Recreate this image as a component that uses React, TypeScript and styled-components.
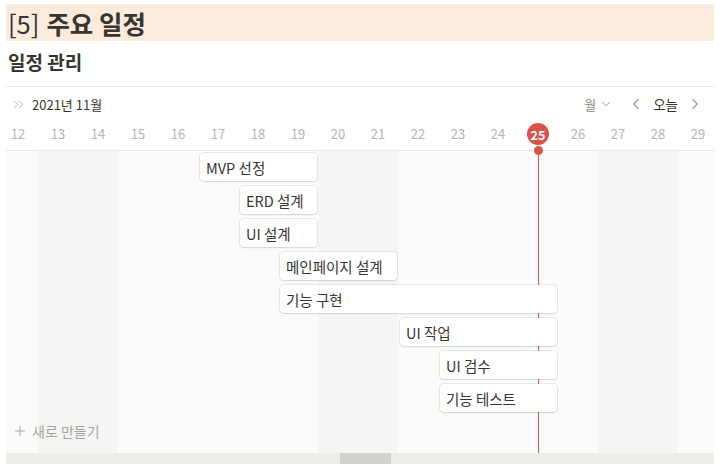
import React from "react";
import styled, { createGlobalStyle } from "styled-components";
import { ChevronsRight, ChevronDown, ChevronLeft, ChevronRight, Plus } from "lucide-react";

const Global = createGlobalStyle`
  html, body { margin: 0; padding: 0; background: #fff; }
  body { font-family: "Noto Sans CJK KR", "Noto Sans", sans-serif; color: #37352f; }
  * { box-sizing: border-box; }
`;

const COL = 40;
const DAYS = Array.from({ length: 18 }, (_, i) => 12 + i);
const WEEKEND = new Set([13, 14, 20, 21, 27, 28]);
const TODAY = 25;

const tasks = [
  { name: "MVP 선정", from: 17, to: 19 },
  { name: "ERD 설계", from: 18, to: 19 },
  { name: "UI 설계", from: 18, to: 19 },
  { name: "메인페이지 설계", from: 19, to: 21 },
  { name: "기능 구현", from: 19, to: 25 },
  { name: "UI 작업", from: 22, to: 25 },
  { name: "UI 검수", from: 23, to: 25 },
  { name: "기능 테스트", from: 23, to: 25 },
];

const Page = styled.div`
  width: 719px;
  padding: 4px 5px 0 6px;
`;

const TitleBand = styled.h1`
  margin: 0;
  height: 37px;
  background: #faebdd;
  padding-left: 2px;
  display: flex;
  align-items: center;
  font-size: 25.5px;
  line-height: 1;
  font-weight: 700;
  color: #37352f;
`;

const Bracket = styled.span`
  font-weight: 400;
  margin-right: 7px;
`;

const SubTitle = styled.h2`
  margin: 0;
  height: 46px;
  display: flex;
  align-items: center;
  padding-left: 2px;
  padding-bottom: 4px;
  font-size: 19px;
  font-weight: 700;
  border-bottom: 1px solid #e9e9e7;
`;

const Toolbar = styled.div`
  height: 36px;
  display: flex;
  align-items: center;
  padding: 0 10px 2px 4px;
  font-size: 13px;
`;

const MonthLabel = styled.span`
  margin-left: 5px;
  color: #37352f;
`;

const Spacer = styled.div`
  flex: 1;
`;

const ViewSelect = styled.span`
  display: flex;
  align-items: center;
  gap: 3px;
  color: #8a8985;
  margin-right: 14px;
`;

const TodayBtn = styled.span`
  color: #37352f;
  margin: 0 8px 0 8px;
  font-size: 13.5px;
`;

const Clip = styled.div`
  overflow: hidden;
  position: relative;
`;

const Track = styled.div`
  margin-left: -8px;
  width: ${DAYS.length * COL}px;
`;

const DateRow = styled.div`
  display: grid;
  grid-template-columns: repeat(${DAYS.length}, ${COL}px);
  height: 28px;
  border-bottom: 1px solid #e9e9e7;
  align-items: start;
`;

const DateCell = styled.div`
  position: relative;
  display: flex;
  justify-content: center;
  font-size: 13px;
  color: #b5b4b1;
  height: 100%;
  padding-top: 1px;
`;

const TodayCircle = styled.span`
  width: 22px;
  height: 22px;
  margin-top: -1px;
  border-radius: 50%;
  background: #d9534c;
  color: #fff;
  font-weight: 700;
  display: flex;
  align-items: center;
  justify-content: center;
  font-size: 12.5px;
`;

const TodayDot = styled.span`
  position: absolute;
  left: 50%;
  bottom: -5px;
  width: 9px;
  height: 9px;
  margin-left: -4.5px;
  border-radius: 50%;
  background: #d9534c;
  z-index: 2;
`;

const Board = styled.div`
  display: grid;
  grid-template-columns: repeat(${DAYS.length}, ${COL}px);
  grid-template-rows: 2px repeat(${tasks.length}, 33px) 28px 8px;
  height: 302px;
`;

const ColumnBg = styled.div<{ $weekend: boolean; $col: number }>`
  grid-column: ${(p) => p.$col};
  grid-row: 1 / -1;
  background: ${(p) => (p.$weekend ? "#f5f5f3" : "#fbfbfa")};
`;

const TodayLine = styled.div<{ $col: number }>`
  grid-column: ${(p) => p.$col};
  grid-row: 1 / -1;
  justify-self: center;
  width: 1px;
  margin-left: 1px;
  background: #d9534c;
`;

const Bar = styled.div<{ $from: number; $to: number; $row: number }>`
  grid-column: ${(p) => p.$from} / ${(p) => p.$to};
  grid-row: ${(p) => p.$row};
  margin: 0 1px 5px 2px;
  background: #fff;
  border-radius: 4px;
  box-shadow: 0 0 0 1px rgba(15, 15, 15, 0.07), 0 1px 2px rgba(15, 15, 15, 0.1);
  display: flex;
  align-items: center;
  padding-left: 6px;
  font-size: 14.5px;
  color: #37352f;
  white-space: nowrap;
  overflow: hidden;
  z-index: 1;
`;

const NewRow = styled.div`
  grid-column: 1 / 8;
  grid-row: ${tasks.length + 2};
  display: flex;
  align-items: center;
  gap: 4px;
  padding-left: 14px;
  font-size: 14px;
  color: #a5a4a0;
  z-index: 1;
`;

const Scrollbar = styled.div`
  height: 11px;
  background: #edece9;
  display: flex;
  align-items: center;
  padding-left: 334px;
`;

const Thumb = styled.div`
  width: 51px;
  height: 11px;
  background: #d3d1cb;
`;

export default function App() {
  const colOf = (d: number) => d - 12 + 1;
  return (
    <>
      <Global />
      <Page>
        <TitleBand>
          <Bracket>[5]</Bracket>주요 일정
        </TitleBand>
        <SubTitle>일정 관리</SubTitle>
        <Toolbar>
          <ChevronsRight size={17} color="#b9b8b5" strokeWidth={1.4} />
          <MonthLabel>2021년 11월</MonthLabel>
          <Spacer />
          <ViewSelect>
            월 <ChevronDown size={14} strokeWidth={1.5} />
          </ViewSelect>
          <ChevronLeft size={18} color="#9b9a97" strokeWidth={1.5} />
          <TodayBtn>오늘</TodayBtn>
          <ChevronRight size={18} color="#9b9a97" strokeWidth={1.5} />
        </Toolbar>
        <Clip>
          <Track>
            <DateRow>
              {DAYS.map((d) => (
                <DateCell key={d}>
                  {d === TODAY ? (
                    <>
                      <TodayCircle>{d}</TodayCircle>
                      <TodayDot />
                    </>
                  ) : (
                    d
                  )}
                </DateCell>
              ))}
            </DateRow>
            <Board>
              {DAYS.map((d) => (
                <ColumnBg key={d} $col={colOf(d)} $weekend={WEEKEND.has(d)} />
              ))}
              <TodayLine $col={colOf(TODAY)} />
              {tasks.map((t, i) => (
                <Bar key={t.name} $from={colOf(t.from)} $to={colOf(t.to) + 1} $row={i + 2}>
                  {t.name}
                </Bar>
              ))}
              <NewRow>
                <Plus size={16} strokeWidth={1.5} /> 새로 만들기
              </NewRow>
            </Board>
          </Track>
        </Clip>
        <Scrollbar>
          <Thumb />
        </Scrollbar>
      </Page>
    </>
  );
}
